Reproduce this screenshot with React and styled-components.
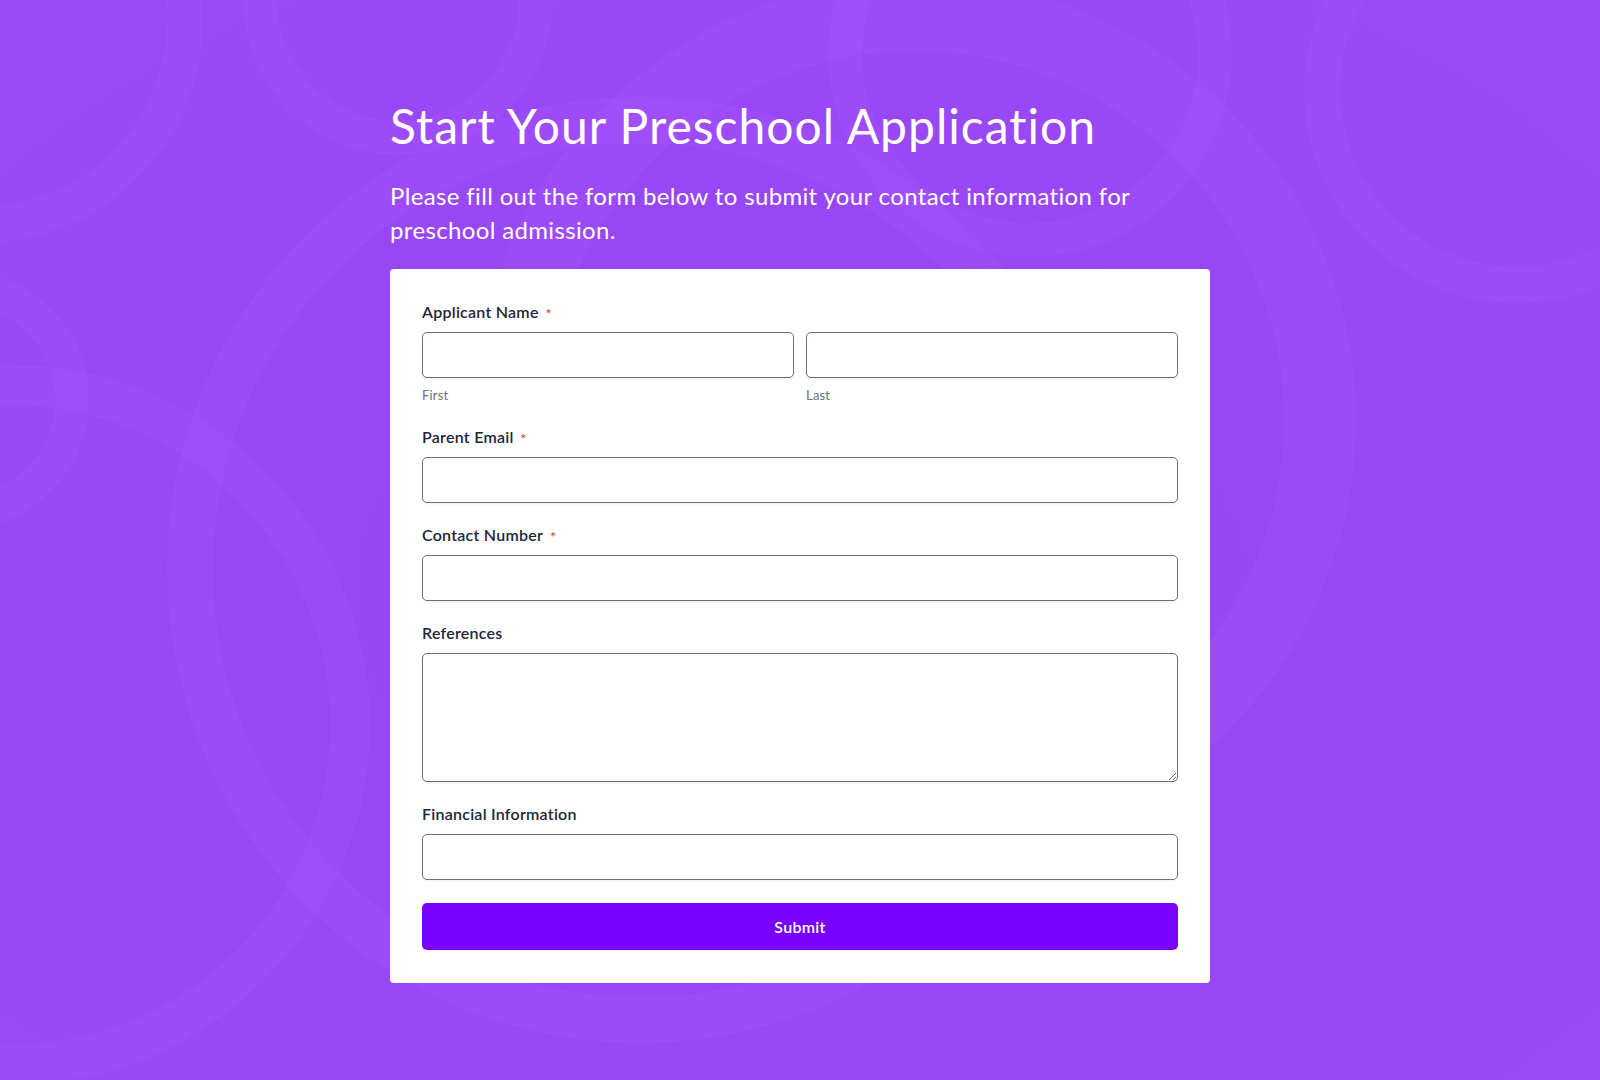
import React from "react";
import styled, { createGlobalStyle } from "styled-components";

const GlobalStyle = createGlobalStyle`
  *, *::before, *::after {
    box-sizing: border-box;
  }
  html, body {
    margin: 0;
    padding: 0;
  }
  body {
    font-family: "Lato", "Open Sans", sans-serif;
    background: #9a48f8;
    -webkit-font-smoothing: antialiased;
  }
`;

const Page = styled.div`
  position: relative;
  min-height: 100vh;
  overflow: hidden;
  display: flex;
  justify-content: center;
  padding-top: 97px;
  padding-bottom: 97px;
`;

const Backdrop = styled.svg`
  position: absolute;
  inset: 0;
  width: 100%;
  height: 100%;
  z-index: 0;
  pointer-events: none;
`;

const Wrapper = styled.main`
  position: relative;
  z-index: 1;
  width: 820px;
`;

const Title = styled.h1`
  margin: 0;
  font-size: 48px;
  line-height: 1.2;
  font-weight: 400;
  color: #ffffff;
  letter-spacing: 1px;
`;

const Intro = styled.p`
  margin: 24px 0 22px;
  font-size: 24px;
  line-height: 34px;
  font-weight: 400;
  letter-spacing: 0.35px;
  color: #ffffff;
`;

const Card = styled.form`
  background: #ffffff;
  border-radius: 4px;
  padding: 33px 32px;
  display: flex;
  flex-direction: column;
  gap: 22px;
`;

const Field = styled.div`
  display: flex;
  flex-direction: column;
`;

const Label = styled.label`
  display: flex;
  align-items: center;
  font-size: 16px;
  line-height: 20px;
  font-weight: 600;
  letter-spacing: 0.25px;
  color: #1b2638;
  margin-bottom: 10px;
`;

const Required = styled.span`
  color: #d6402c;
  font-size: 13px;
  line-height: 20px;
  margin-left: 7px;
  position: relative;
  top: 2px;
`;

const Split = styled.div`
  display: grid;
  grid-template-columns: 1fr 1fr;
  column-gap: 12px;
`;

const Part = styled.div`
  display: flex;
  flex-direction: column;
`;

const Hint = styled.span`
  margin-top: 8px;
  font-size: 13px;
  line-height: 19px;
  letter-spacing: 0.2px;
  color: #6b7280;
`;

const Input = styled.input`
  display: block;
  width: 100%;
  height: 46px;
  padding: 0 12px;
  border: 1px solid #6a7281;
  border-radius: 5px;
  background: #ffffff;
  box-shadow: 0 1px 2px rgba(17, 24, 39, 0.08);
  font-family: inherit;
  font-size: 16px;
  color: #1b2638;
  outline: none;
`;

const TextArea = styled.textarea`
  display: block;
  width: 100%;
  height: ${(props) => props.rows * 32 + 1}px;
  padding: 10px 12px;
  border: 1px solid #6a7281;
  border-radius: 5px;
  background: #ffffff;
  box-shadow: 0 1px 2px rgba(17, 24, 39, 0.08);
  font-family: inherit;
  font-size: 16px;
  color: #1b2638;
  resize: vertical;
  outline: none;
`;

const Submit = styled.button`
  margin-top: 1px;
  height: 47px;
  border: 0;
  border-radius: 5px;
  background: #7a00ff;
  color: #ffffff;
  font-family: inherit;
  font-size: 16px;
  font-weight: 600;
  letter-spacing: 0.3px;
  cursor: pointer;
`;

// soft rings drawn behind the form
const rings = [
  { cx: -20, cy: 20, r: 205, w: 36 },
  { cx: 398, cy: 0, r: 138, w: 34 },
  { cx: 1030, cy: 55, r: 185, w: 34 },
  { cx: 1517, cy: 90, r: 195, w: 36 },
  { cx: 915, cy: 420, r: 405, w: 72 },
  { cx: -40, cy: 400, r: 112, w: 34 },
  { cx: 10, cy: 725, r: 340, w: 40 },
  { cx: 640, cy: 570, r: 450, w: 46 },
];

const Background = () => (
  <Backdrop viewBox="0 0 1600 1080" preserveAspectRatio="xMidYMid slice">
    <defs>
      <radialGradient id="shade" cx="50%" cy="55%" r="70%">
        <stop offset="0%" stopColor="#9343f3" stopOpacity="0.5" />
        <stop offset="100%" stopColor="#9343f3" stopOpacity="0" />
      </radialGradient>
    </defs>
    <rect width="1600" height="1080" fill="#9a48f8" />
    <rect width="1600" height="1080" fill="url(#shade)" />
    {rings.map((ring, i) => (
      <circle
        key={i}
        cx={ring.cx}
        cy={ring.cy}
        r={ring.r}
        fill="none"
        stroke="#a552ff"
        strokeOpacity="0.4"
        strokeWidth={ring.w}
      />
    ))}
  </Backdrop>
);

export default function App() {
  return (
    <Page>
      <GlobalStyle />
      <Background />
      <Wrapper>
        <Title>Start Your Preschool Application</Title>
        <Intro>
          Please fill out the form below to submit your contact information for
          preschool admission.
        </Intro>
        <Card onSubmit={(e) => e.preventDefault()}>
          <Field>
            <Label>
              Applicant Name<Required>*</Required>
            </Label>
            <Split>
              <Part>
                <Input type="text" aria-label="First name" />
                <Hint>First</Hint>
              </Part>
              <Part>
                <Input type="text" aria-label="Last name" />
                <Hint>Last</Hint>
              </Part>
            </Split>
          </Field>
          <Field>
            <Label htmlFor="email">
              Parent Email<Required>*</Required>
            </Label>
            <Input id="email" type="email" />
          </Field>
          <Field>
            <Label htmlFor="phone">
              Contact Number<Required>*</Required>
            </Label>
            <Input id="phone" type="tel" />
          </Field>
          <Field>
            <Label htmlFor="refs">References</Label>
            <TextArea id="refs" rows={4} />
          </Field>
          <Field>
            <Label htmlFor="finance">Financial Information</Label>
            <Input id="finance" type="text" />
          </Field>
          <Submit type="submit">Submit</Submit>
        </Card>
      </Wrapper>
    </Page>
  );
}
